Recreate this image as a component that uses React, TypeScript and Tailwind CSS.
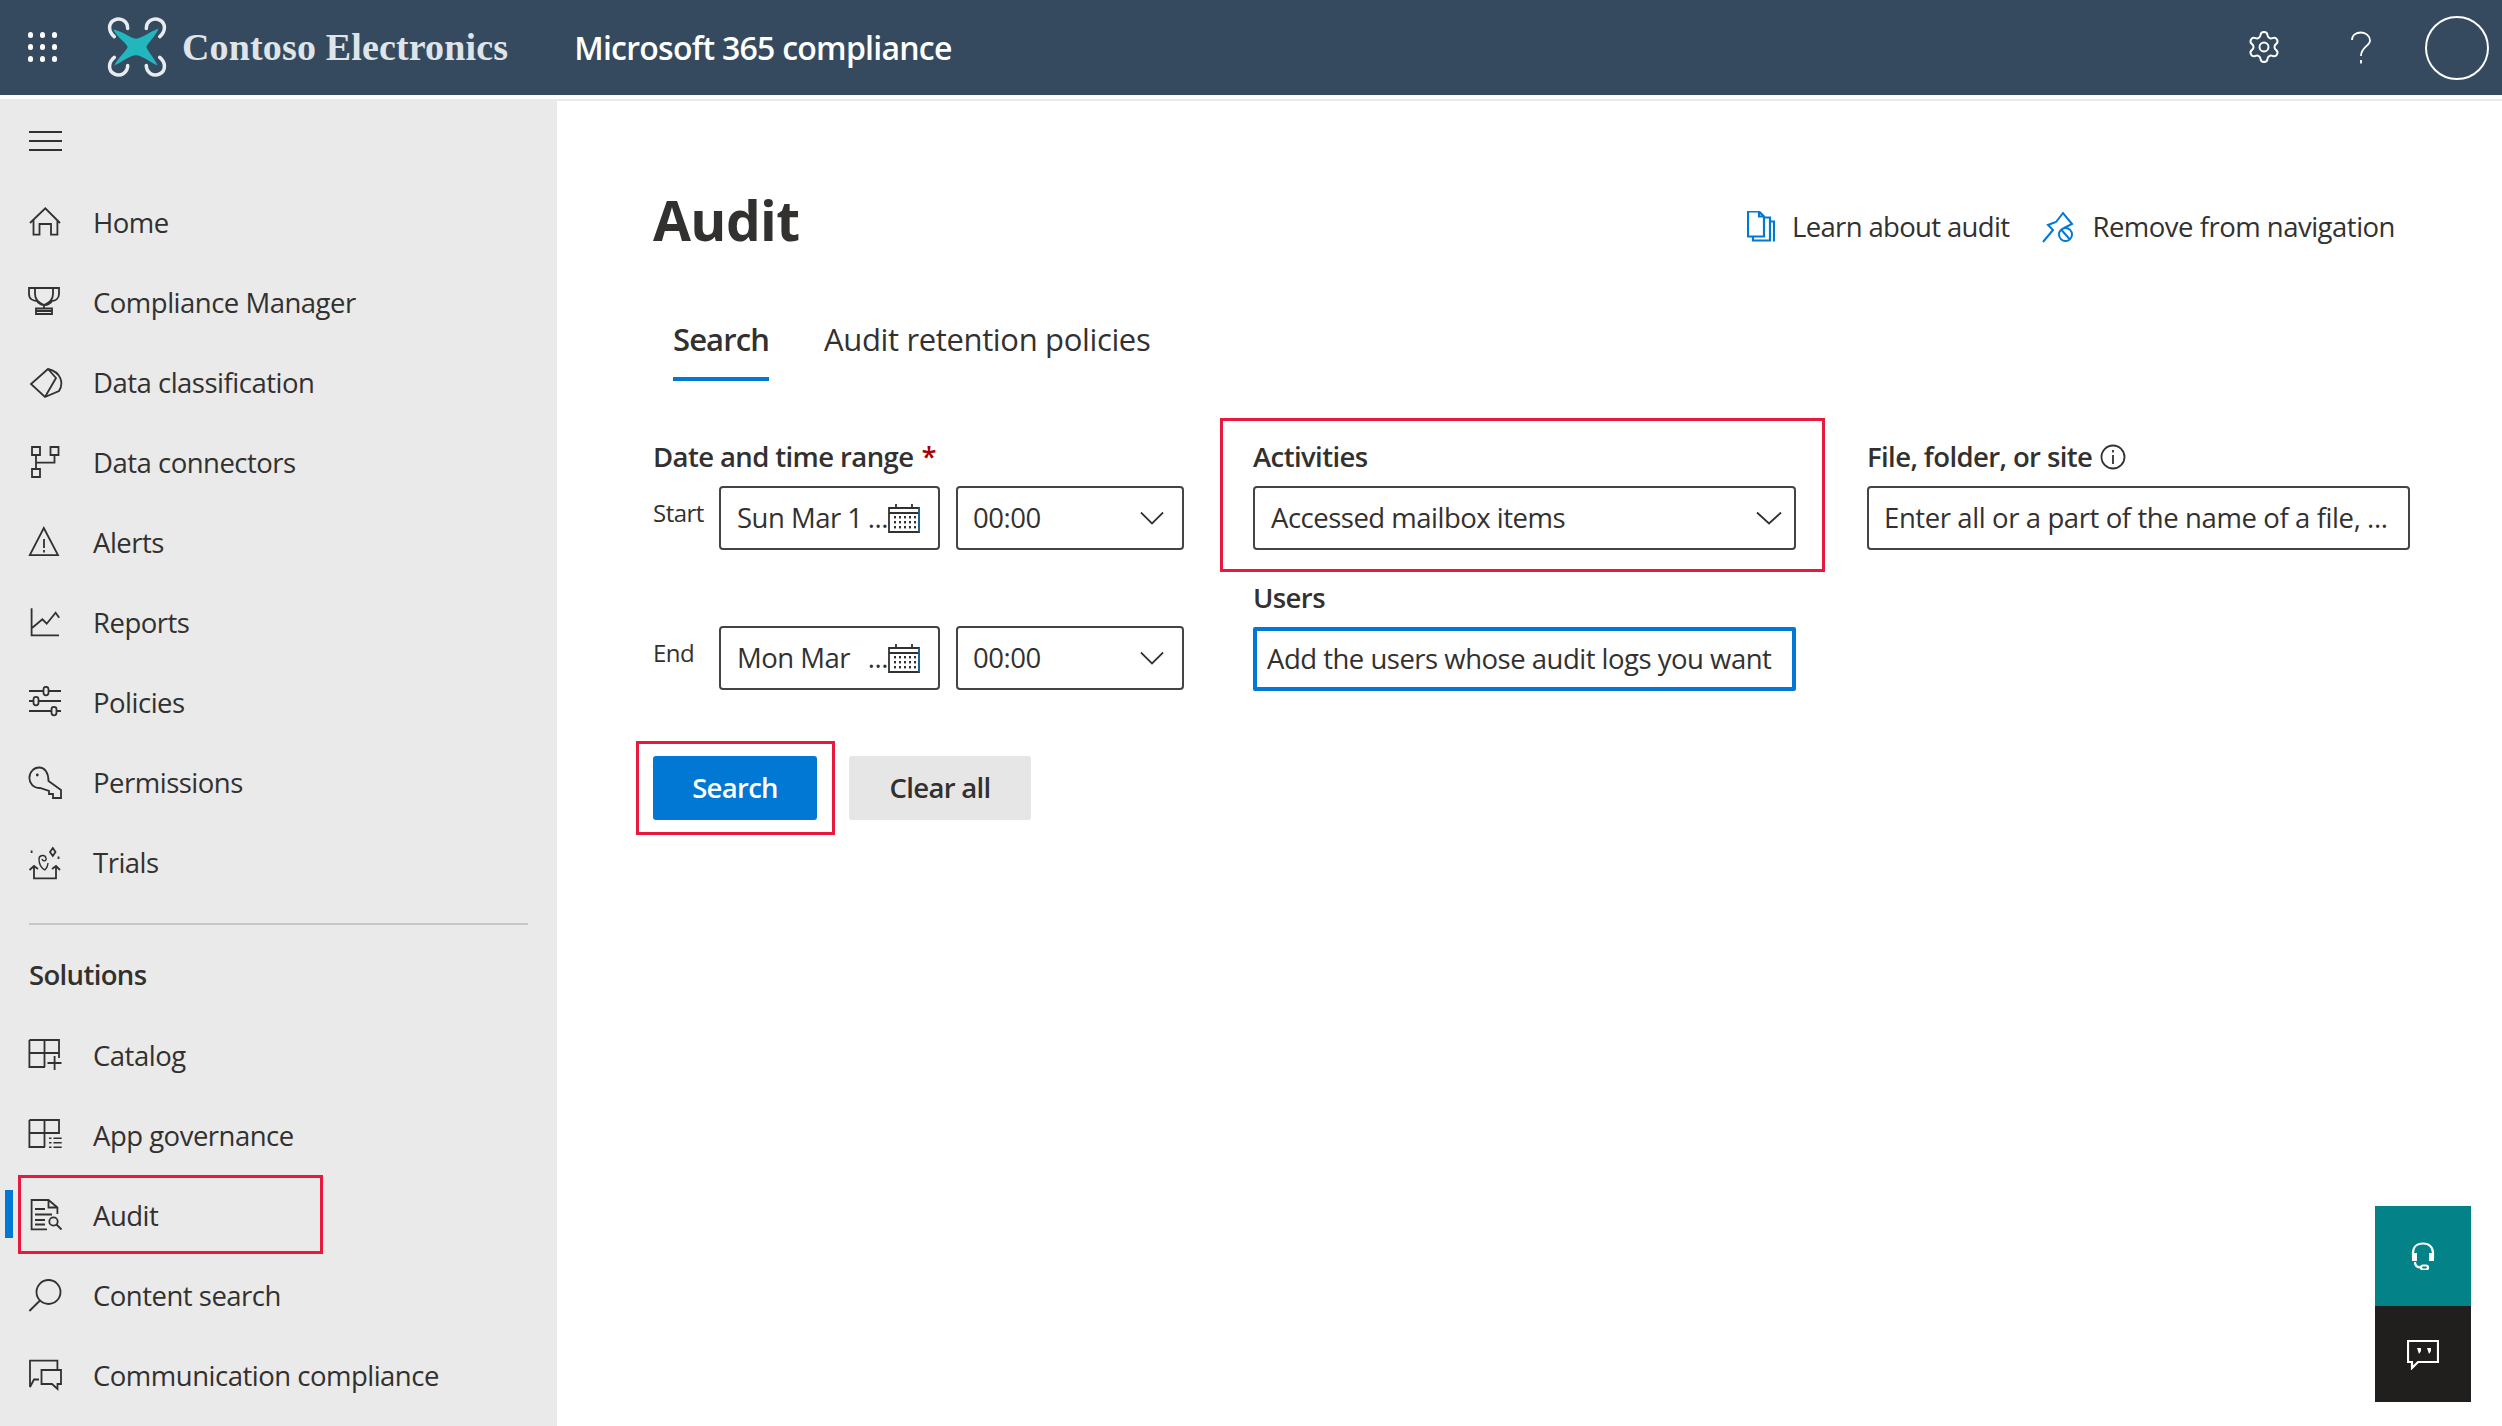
import React from "react";
import { Settings } from "lucide-react";

const S = ({ children, w = 36, h = 36, cls = "", color = "#323130", sw = 1.8 }: any) => (
  <svg width={w} height={h} viewBox={`0 0 ${w} ${h}`} fill="none" stroke={color} strokeWidth={sw} className={"shrink-0 " + cls}>
    {children}
  </svg>
);

const icons: Record<string, React.ReactNode> = {
  home: <path d="M2 17 17.3 2.3 32 17M5.5 14V28.7H11.5V18H23V28.7H29.4V14" />,
  trophy: (
    <path d="M1 2H31V8C31 13 27 15 24 15 22 18 19 19 16.5 19 14 19 11 18 9 15 5 15 1 13 1 8ZM7 2V8C7 13 11 17 16 19 21 17 25 13 25 8V2M16 19V22M8 22.5H24V28H8ZM8 25H24" />
  ),
  tag: (
    <path d="M20 3 3 18 17 31 31 25C36 17 33 6 20 3ZM20 3 28 12 17 31" />
  ),
  conn: (
    <path d="M4 1H12V9H4ZM22.5 1H30.5V9H22.5ZM4 23H12V31H4ZM8 9V23M8 16.7H26.5V9" />
  ),
  alert: (
    <>
      <path d="M15.8 2 30 29.2H1.8Z" />
      <path d="M16 13V22M16 24V26.5" />
    </>
  ),
  reports: <path d="M3.6 2.3V29.3H31M4.3 21.7 14.4 13.3 18.7 17.7 27.6 6.7 31.2 11.7" />,
  policies: (
    <>
      <path d="M1 5H33M1 15H33M1 25H33" />
      <rect x="15.5" y="0.8" width="5" height="8.5" rx="2.5" fill="#eaeaea" />
      <rect x="5.5" y="10.8" width="5" height="8.5" rx="2.5" fill="#eaeaea" />
      <rect x="23.5" y="20.8" width="5" height="8.5" rx="2.5" fill="#eaeaea" />
    </>
  ),
  key: (
    <>
      <path d="M20.5 15 33 24V32H25V28H21V25L12 22C5 22 1.4 17 1.4 12 1.4 6 6 1.5 11 1.5 17 1.5 20.5 7 20.5 15Z" />
      <circle cx="9.3" cy="9" r="1.4" fill="#323130" stroke="none" />
    </>
  ),
  trials: (
    <>
      <path d="M6 21V32.3H28V21M1.5 24 6 20 10 23M24 23 28 20 32 24" />
      <path d="M17 24C13 22 11 18 11 13 11 9 17 8 18 12 19 15 15 16 14 13M17 24C19 22 20 20 20 17" strokeWidth="1.4" />
      <path d="M24.8 2 27.5 6 24.8 10 22 6ZM3.6 4.5V7M30.5 10.5V13" />
    </>
  ),
  catalog: <path d="M1.4 1H31V19M1.4 1V28H17M1.4 14H31M16.5 1V28M19.5 24H33.5M26.6 17V31" />,
  app: (
    <>
      <path d="M1.4 1H31V15M1.4 1V28H17M1.4 14H31M16.5 1V28" />
      <path d="M25.5 19.3H33.7M25.5 23.7H33.7M25.5 28.3H33.7M21 19.3H23.5M21 23.7H23.5M21 28.3H23.5" strokeWidth="1.4" />
    </>
  ),
  audit: (
    <>
      <path d="M19 30.3H3.6V1H20.5L29.4 8.5V15M20.5 1V8.5H29.4" />
      <path d="M7 10H17M7 15.5H24M7 21H17M7 25.5H17" />
      <circle cx="25.5" cy="22.5" r="4.2" />
      <path d="M28.5 25.5 33.5 30.5" />
    </>
  ),
  search: (
    <>
      <circle cx="20.5" cy="13" r="12" />
      <path d="M12 21.5 1.4 32" />
    </>
  ),
  comm: (
    <>
      <path d="M11 20.5H6L2 28V1.7H29.4V11" />
      <path d="M13.5 11H33V25H29.5V30L24 25H13.5Z" />
    </>
  ),
};

const Item = ({ icon, label }: { icon: string; label: string }) => (
  <div className="h-[80px] flex items-center pl-[28px]">
    <S>{icons[icon]}</S>
    <span className="ml-[29px] -mt-[2px] text-[#323130]">{label}</span>
  </div>
);

const Calendar = () => (
  <svg width="32" height="30" viewBox="0 0 32 30" className="shrink-0">
    <path d="M1 5H31V29H1ZM1 10H31" fill="none" stroke="#323130" strokeWidth="1.8" />
    <path d="M8 1V6M24 1V6" stroke="#323130" strokeWidth="1.8" />
    <path d="M31 5V29" stroke="#0078d4" strokeWidth="1.2" />
    <g fill="#323130">
      {[6, 11, 16, 21, 26].map((x) =>
        [13, 18, 23].map((y) => <rect key={x + "-" + y} x={x} y={y} width="2" height="2.4" />)
      )}
    </g>
  </svg>
);

const Chevron = ({ w = 26 }: { w?: number }) => (
  <svg width={w} height="14" viewBox="0 0 26 14" preserveAspectRatio="none" fill="none" stroke="#323130" strokeWidth="1.8" className="shrink-0">
    <path d="M1 1.5 13 12.5 25 1.5" />
  </svg>
);

const DateField = ({ text }: { text: string }) => (
  <div className="w-[221px] h-[64px] border-2 border-[#444] rounded-[4px] flex items-center pl-[16px] pr-[18px] text-[#323130]">
    <span className="whitespace-nowrap">{text}</span>
    <span className="ml-auto">...</span>
    <Calendar />
  </div>
);

const TimeField = () => (
  <div className="w-[228px] h-[64px] border-2 border-[#444] rounded-[4px] flex items-center justify-between pl-[15px] pr-[18px] text-[#323130]">
    <span>00:00</span>
    <Chevron w={24} />
  </div>
);

const RedBox = ({ cls }: { cls: string }) => <div className={"absolute border-[3px] border-[#e8193f] pointer-events-none " + cls} />;

export default function App() {
  return (
    <div
      className="w-[2502px] h-[1426px] overflow-hidden bg-white flex flex-col text-[27.5px] relative tracking-[-0.5px]"
      style={{ fontFamily: '"Open Sans", "Noto Sans", sans-serif' }}
    >
      <header className="h-[95px] shrink-0 bg-[#354a5f] flex items-center text-white">
        <div className="ml-[27px] w-[30px] h-[30px] grid grid-cols-3 gap-[6px] -mt-[2px]">
          {Array.from({ length: 9 }).map((_, i) => (
            <span key={i} className="w-[5px] h-[6px] rounded-full bg-white justify-self-center" />
          ))}
        </div>
        <svg width="60" height="60" viewBox="0 0 58 58" className="ml-[50px] -mt-[2px] shrink-0">
          <path d="M6 12C16 14 22 20 28 21 34 20 42 14 50 11 46 20 40 24 38 29 40 34 46 40 49 47 42 44 34 37 28 37 22 37 14 44 7 47 10 40 18 34 20 29 18 24 10 20 6 12Z" fill="#22b7bf" />
          <g fill="none" stroke="#e6ecef" strokeWidth="3.4" strokeLinecap="round">
            <path d="M7 19C1 14 1 6 7 3 13 0 20 4 20 11" />
            <path d="M51 19C57 14 57 6 51 3 45 0 38 4 38 11" />
            <path d="M7 39C1 44 1 52 7 55 13 58 20 54 20 47" />
            <path d="M51 39C57 44 57 52 51 55 45 58 38 54 38 47" />
          </g>
        </svg>
        <span
          className="ml-[15px] text-[38px] font-bold text-[#dfe4e8] whitespace-nowrap -mt-[1px] tracking-[0.15px]"
          style={{ fontFamily: '"Liberation Serif", serif' }}
        >
          Contoso Electronics
        </span>
        <span className="ml-[66px] text-[32px] font-semibold whitespace-nowrap tracking-[-0.75px]">Microsoft 365 compliance</span>
        <Settings size={36} strokeWidth={1.3} className="ml-auto -mt-[2px] text-white" />
        <svg width="22" height="34" viewBox="0 0 22 34" fill="none" stroke="white" strokeWidth="1.8" className="ml-[68px]">
          <path d="M2 9C2 4 6 1.5 11 1.5 16 1.5 20 5 20 9.5 20 15 11 16 11 25M11 29V32.5" />
        </svg>
        <div className="ml-[53px] mr-[13px] w-[64px] h-[64px] rounded-full border-2 border-white" />
      </header>
      <div className="h-[4px] shrink-0 bg-white" />

      <div className="flex flex-1 min-h-0">
        <nav className="w-[557px] shrink-0 bg-[#eaeaea] relative">
          <div className="h-[85px] pl-[29px] flex items-center">
            <div className="w-[33px] flex flex-col gap-[7px] -mt-[1px]">
              <span className="h-[2px] bg-[#323130]" />
              <span className="h-[2px] bg-[#323130]" />
              <span className="h-[2px] bg-[#323130]" />
            </div>
          </div>
          <Item icon="home" label="Home" />
          <Item icon="trophy" label="Compliance Manager" />
          <Item icon="tag" label="Data classification" />
          <Item icon="conn" label="Data connectors" />
          <Item icon="alert" label="Alerts" />
          <Item icon="reports" label="Reports" />
          <Item icon="policies" label="Policies" />
          <Item icon="key" label="Permissions" />
          <Item icon="trials" label="Trials" />
          <div className="mt-[19px] mx-[29px] h-[2px] bg-[#c8c8c8]" />
          <div className="mt-[10px] mb-[2px] h-[80px] pl-[29px] flex items-center font-semibold text-[#323130] tracking-[-0.65px]">Solutions</div>
          <Item icon="catalog" label="Catalog" />
          <Item icon="app" label="App governance" />
          <div className="relative">
            <div className="absolute left-[5px] top-[13px] w-[8px] h-[48px] bg-[#0078d4]" />
            <RedBox cls="left-[18px] top-[-2px] w-[305px] h-[79px]" />
            <Item icon="audit" label="Audit" />
          </div>
          <Item icon="search" label="Content search" />
          <Item icon="comm" label="Communication compliance" />
        </nav>

        <main className="flex-1 min-w-0 border-t-2 border-[#eaeaea] pl-[96px] pr-[92px]">
          <div className="h-[202px] flex items-center justify-between pt-[40px]">
            <h1 className="text-[55px] font-bold text-[#323130] leading-none -mt-[6px] tracking-[-0.6px]">Audit</h1>
            <div className="flex items-center pr-[15px] pt-[10px] text-[#323130] tracking-[-0.5px]">
              <svg width="28" height="32" viewBox="0 0 28 32" fill="none" stroke="#0078d4" strokeWidth="2.2" className="shrink-0">
                <path d="M1 1H12L17 6V26H1ZM12 1V6H17M18 7H23V30H6V26M23 11H27V31" transform="translate(0 -0.5)" />
              </svg>
              <span className="ml-[17px] tracking-[-0.65px]">Learn about audit</span>
              <svg width="32" height="32" viewBox="0 0 32 32" fill="none" stroke="#0078d4" strokeWidth="2" className="ml-[33px] shrink-0">
                <path d="M1 31 11 19 6 14 14 11 21 2 30 13 22 17" />
                <circle cx="23.5" cy="23.5" r="6.5" />
                <path d="M19.5 19 27.5 28" />
              </svg>
              <span className="ml-[18px]">Remove from navigation</span>
            </div>
          </div>

          <div className="flex pl-[20px] gap-[55px] text-[31px] text-[#323130] tracking-[-0.35px]">
            <div className="h-[78px] border-b-4 border-[#0078d4] pb-[2px] flex items-center font-semibold tracking-[-0.9px]">Search</div>
            <div className="h-[78px] border-b-4 border-transparent pb-[2px] flex items-center">Audit retention policies</div>
          </div>

          <div className="mt-[58px] grid grid-cols-[531px_543px_545px] gap-x-[69px] text-[#323130]">
            <div>
              <div className="h-[36px] mb-[11px] flex items-center font-semibold tracking-[-0.6px]">
                Date and time range<span className="ml-[8px] text-[#a80000]">*</span>
              </div>
              <div className="flex">
                <span className="w-[66px] text-[24px] leading-[54px]">Start</span>
                <DateField text="Sun Mar 1" />
                <div className="ml-[16px]"><TimeField /></div>
              </div>
              <div className="flex mt-[76px]">
                <span className="w-[66px] text-[24px] leading-[54px]">End</span>
                <DateField text="Mon Mar" />
                <div className="ml-[16px]"><TimeField /></div>
              </div>
            </div>

            <div>
              <div className="relative">
                <RedBox cls="left-[-33px] top-[-21px] w-[605px] h-[154px]" />
                <div className="h-[36px] mb-[11px] flex items-center font-semibold tracking-[-0.6px]">Activities</div>
                <div className="h-[64px] border-2 border-[#444] rounded-[4px] flex items-center justify-between pl-[16px] pr-[12px]">
                  <span>Accessed mailbox items</span>
                  <Chevron />
                </div>
              </div>
              <div className="mt-[30px] h-[36px] mb-[11px] flex items-center font-semibold tracking-[-0.6px]">Users</div>
              <div className="h-[64px] border-[4px] border-[#0078d4] rounded-[2px] flex items-center pl-[10px] pr-[18px]">
                <span className="whitespace-nowrap overflow-hidden">Add the users whose audit logs you want to</span>
              </div>
            </div>

            <div className="ml-[2px]">
              <div className="h-[36px] mb-[11px] flex items-center font-semibold tracking-[-0.6px]">
                File, folder, or site
                <svg width="26" height="26" viewBox="0 0 26 26" fill="none" stroke="#323130" strokeWidth="1.8" className="ml-[8px]">
                  <circle cx="13" cy="13" r="11.5" />
                  <path d="M13 11V20M13 6V8.5" />
                </svg>
              </div>
              <div className="h-[64px] border-2 border-[#444] rounded-[4px] flex items-center pl-[15px] pr-[15px]">
                <span className="whitespace-nowrap overflow-hidden tracking-[-0.4px]">Enter all or a part of the name of a file, ...</span>
              </div>
            </div>
          </div>

          <div className="mt-[65px] flex gap-[32px] font-semibold tracking-[-0.7px]">
            <div className="relative">
              <RedBox cls="left-[-17px] top-[-15px] w-[199px] h-[94px]" />
              <button className="w-[164px] h-[64px] bg-[#0078d4] text-white rounded-[3px]">Search</button>
            </div>
            <button className="w-[182px] h-[64px] bg-[#e6e6e6] text-[#323130] rounded-[3px]">Clear all</button>
          </div>
        </main>
      </div>

      <div className="absolute left-[2375px] top-[1206px] w-[96px] flex flex-col">
        <div className="h-[100px] bg-[#038387] flex items-center justify-center">
          <svg width="24" height="28" viewBox="0 0 24 28" fill="none" stroke="white" strokeWidth="2.2">
            <path d="M2 16V11C2 5 6 1.5 12 1.5 18 1.5 22 5 22 11V16M4 20C4 24 7 25.5 10 25.5" />
            <rect x="1" y="11" width="5" height="8" fill="white" stroke="none" />
            <rect x="18" y="11" width="5" height="8" fill="white" stroke="none" />
            <rect x="10" y="23.5" width="7" height="4" rx="2" />
          </svg>
        </div>
        <div className="h-[96px] bg-[#201f1e] flex items-center justify-center">
          <svg width="32" height="30" viewBox="0 0 32 30" fill="none" stroke="white" strokeWidth="2.2" className="mt-[2px]">
            <path d="M1 1H31V22H11L5 28V22H1Z" />
            <path d="M10 8H14V11L12 14ZM20 8H24V11L22 14Z" fill="white" stroke="none" />
          </svg>
        </div>
      </div>
    </div>
  );
}
